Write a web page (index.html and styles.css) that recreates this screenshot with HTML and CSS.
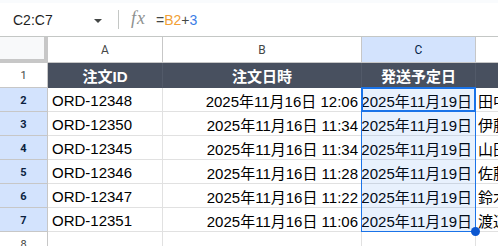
FILE: index.html
```html
<!DOCTYPE html>
<html lang="ja">
<head>
<meta charset="utf-8">
<link rel="stylesheet" href="styles.css">
</head>
<body>
<div class="app">
  <div class="topstrip"></div>
  <div class="fbar">
    <div class="namebox">C2:C7</div>
    <div class="caret"></div>
    <div class="divider"></div>
    <div class="fx">fx</div>
    <div class="formula"><span class="f-op">=</span><span class="f-ref">B2</span><span class="f-op">+</span><span class="f-num">3</span></div>
  </div>
  <div class="sheet">
    <div class="corner"></div>
    <div class="colhdr">A</div>
    <div class="colhdr">B</div>
    <div class="colhdr sel">C</div>
    <div class="colhdr last"></div>

    <div class="rowhdr">1</div>
    <div class="cell head">注文ID</div>
    <div class="cell head">注文日時</div>
    <div class="cell head">発送予定日</div>
    <div class="cell head last"></div>

    <div class="rowhdr sel">2</div>
    <div class="cell">ORD-12348</div>
    <div class="cell num">2025年11月16日 12:06</div>
    <div class="cell num">2025年11月19日</div>
    <div class="cell last">田中 太郎</div>

    <div class="rowhdr sel">3</div>
    <div class="cell">ORD-12350</div>
    <div class="cell num">2025年11月16日 11:34</div>
    <div class="cell num">2025年11月19日</div>
    <div class="cell last">伊藤 美咲</div>

    <div class="rowhdr sel">4</div>
    <div class="cell">ORD-12345</div>
    <div class="cell num">2025年11月16日 11:34</div>
    <div class="cell num">2025年11月19日</div>
    <div class="cell last">山田 花子</div>

    <div class="rowhdr sel">5</div>
    <div class="cell">ORD-12346</div>
    <div class="cell num">2025年11月16日 11:28</div>
    <div class="cell num">2025年11月19日</div>
    <div class="cell last">佐藤 健</div>

    <div class="rowhdr sel">6</div>
    <div class="cell">ORD-12347</div>
    <div class="cell num">2025年11月16日 11:22</div>
    <div class="cell num">2025年11月19日</div>
    <div class="cell last">鈴木 一郎</div>

    <div class="rowhdr sel">7</div>
    <div class="cell">ORD-12351</div>
    <div class="cell num">2025年11月16日 11:06</div>
    <div class="cell num">2025年11月19日</div>
    <div class="cell last">渡辺 直人</div>

    <div class="rowhdr">8</div>
    <div class="cell"></div>
    <div class="cell"></div>
    <div class="cell"></div>
    <div class="cell last"></div>

    <div class="selection"><div class="handle"></div></div>
    <div class="active"></div>
  </div>
</div>
</body>
</html>
```

FILE: styles.css
```css
html, body {
  margin: 0;
  padding: 0;
  background: #ffffff;
}
body {
  width: 498px;
  height: 246px;
  overflow: hidden;
  font-family: "Liberation Sans", Arial, "Noto Sans CJK JP", sans-serif;
  color: #000;
}
.app {
  width: 498px;
  display: flex;
  flex-direction: column;
}
.topstrip {
  height: 3px;
  background: #f9fbfd;
}
.fbar {
  height: 33px;
  border-bottom: 1px solid #c4c7c5;
  display: flex;
  align-items: center;
  background: #fff;
}
.namebox {
  font-size: 14px;
  color: #1f1f1f;
  margin-left: 13px;
  width: 81px;
  padding-top: 1px;
}
.caret {
  width: 0;
  height: 0;
  border-left: 4px solid transparent;
  border-right: 4px solid transparent;
  border-top: 4px solid #444746;
  margin-top: 2px;
}
.divider {
  width: 1px;
  height: 19px;
  background: #c4c7c5;
  margin-left: 16px;
}
.fx {
  font-family: "Liberation Serif", "Times New Roman", serif;
  font-style: italic;
  font-size: 18px;
  color: #8e918f;
  margin-left: 12px;
  letter-spacing: 1px;
  padding-bottom: 2px;
}
.formula {
  margin-left: 10px;
  font-size: 14px;
  padding-top: 1px;
}
.f-op { color: #444746; }
.f-ref { color: #f29f35; }
.f-num { color: #3b7de6; }

.sheet {
  display: grid;
  grid-template-columns: 48px 115px 199px 114px 1fr;
  grid-template-rows: 26px 25px repeat(6, 24px) 24px;
  position: relative;
}
.corner {
  background: #f8f9fa;
  border-right: 4px solid #c7c7c7;
  border-bottom: 4px solid #c7c7c7;
  box-sizing: border-box;
}
.colhdr {
  box-sizing: border-box;
  border-right: 1px solid #c7c7c7;
  border-bottom: 1px solid #c7c7c7;
  font-family: Roboto, "Liberation Sans", Arial, sans-serif;
  font-size: 12px;
  color: #444746;
  display: flex;
  align-items: center;
  justify-content: center;
  padding-top: 1px;
}
.colhdr.sel {
  background: #d3e3fd;
  color: #041e49;
}
.colhdr.last { border-right: none; }
.rowhdr {
  box-sizing: border-box;
  border-right: 1px solid #c7c7c7;
  border-bottom: 1px solid #c7c7c7;
  font-family: Roboto, "Liberation Sans", Arial, sans-serif;
  font-size: 11px;
  color: #444746;
  display: flex;
  align-items: center;
  justify-content: center;
  padding-top: 1px;
}
.rowhdr.sel {
  background: #d3e3fd;
  color: #0b1f3f;
  font-weight: bold;
}
.cell {
  box-sizing: border-box;
  border-right: 1px solid #e1e1e1;
  border-bottom: 1px solid #e1e1e1;
  font-size: 15px;
  display: flex;
  align-items: center;
  padding: 1px 3px 0 4px;
  white-space: nowrap;
  overflow: hidden;
  font-family: "Liberation Sans", Arial, "Noto Sans CJK JP", sans-serif;
}
.cell.num {
  justify-content: flex-end;
  padding-right: 3px;
}
.cell.last {
  border-right: none;
  padding-left: 2px;
}
.cell.head {
  background: #48505f;
  color: #ffffff;
  font-weight: bold;
  justify-content: center;
  border-right-color: #525a69;
  border-bottom-color: #48505f;
  padding-left: 0;
  padding-right: 0;
}
.selection {
  position: absolute;
  grid-column: 4 / 5;
  grid-row: 3 / 9;
  top: -1px;
  left: -1px;
  right: 0;
  bottom: 0;
  border: 1px solid #1a73e8;
  background: rgba(26, 115, 232, 0.1);
  pointer-events: none;
}
.active {
  position: absolute;
  grid-column: 4 / 5;
  grid-row: 3 / 4;
  top: -1px;
  left: -1px;
  right: 0;
  bottom: 0;
  border: 2px solid #1a73e8;
  pointer-events: none;
}
.handle {
  position: absolute;
  right: -5px;
  bottom: -5px;
  width: 9px;
  height: 9px;
  border-radius: 50%;
  background: #0b57d0;
}
```
